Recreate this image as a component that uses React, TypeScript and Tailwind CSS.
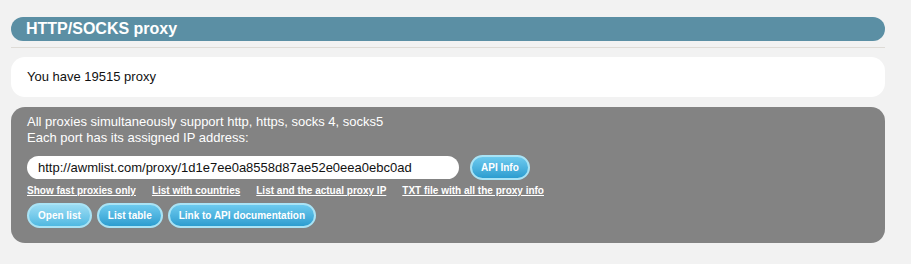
export default function App() {
  const links = [
    "Show fast proxies only",
    "List with countries",
    "List and the actual proxy IP",
    "TXT file with all the proxy info",
  ];

  return (
    <div className="h-[264px] w-[911px] bg-[#f2f2f2] pt-[17px] pl-[11px] pr-[26px] font-['Liberation_Sans',Arial,sans-serif]">
      <div className="flex h-[24px] items-center rounded-[12px] bg-[#5b8fa4] pl-[15px] text-[16px] font-bold text-white">
        HTTP/SOCKS proxy
      </div>
      <div className="mt-[6px] h-px bg-[#dedbd6]" />

      <div className="mt-[9px] flex h-[40px] items-center rounded-[14px] bg-white pl-[16px] text-[13px] text-[#111]">
        You have 19515 proxy
      </div>

      <div className="mt-[10px] h-[136px] rounded-[14px] bg-[#838383] px-[16px] pt-[7px]">
        <div className="text-[13px] leading-[16px] text-white">
          <div>All proxies simultaneously support http, https, socks 4, socks5</div>
          <div>Each port has its assigned IP address:</div>
        </div>

        <div className="mt-[9px] flex items-center gap-[11px]">
          <div className="flex h-[23px] w-[432px] items-center rounded-full bg-white pl-[11px] text-[13px] text-[#111]">
            http://awmlist.com/proxy/1d1e7ee0a8558d87ae52e0eea0ebc0ad
          </div>
          <BlueButton label="API Info" />
        </div>

        <div className="mt-[4px] flex gap-[16px] text-[10px] font-bold leading-[13px] text-white">
          {links.map((l) => (
            <a key={l} href="#" className="underline">
              {l}
            </a>
          ))}
        </div>

        <div className="mt-[6px] flex gap-[5px]">
          <BlueButton label="Open list" light />
          <BlueButton label="List table" />
          <BlueButton label="Link to API documentation" />
        </div>
      </div>
    </div>
  );
}

function BlueButton({ label, light }: { label: string; light?: boolean }) {
  return (
    <button
      className={
        light
          ? "h-[25px] rounded-full border-2 border-[#a9e3f5] bg-gradient-to-b from-[#9adcf3] to-[#4fb9e2] px-[9px] text-[10px] font-bold text-white"
          : "h-[25px] rounded-full border-2 border-[#a9e3f5] bg-gradient-to-b from-[#6ccaee] to-[#2b9dd0] px-[9px] text-[10px] font-bold text-white"
      }
    >
      {label}
    </button>
  );
}
